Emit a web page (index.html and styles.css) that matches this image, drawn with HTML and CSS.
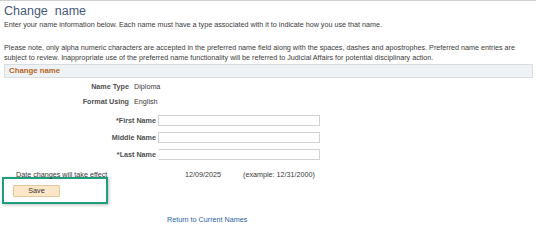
FILE: index.html
```html
<!DOCTYPE html>
<html>
<head>
<meta charset="utf-8">
<link rel="stylesheet" href="styles.css">
</head>
<body>
<div class="topline"></div>
<div class="page">
  <h1 class="title">Change&nbsp; name</h1>
  <p class="intro">Enter your name information below. Each name must have a type associated with it to indicate how you use that name.</p>
  <p class="note">Please note, only alpha numeric characters are accepted in the preferred name field along with the spaces, dashes and apostrophes. Preferred name entries are subject to review. Inappropriate use of the preferred name functionality will be referred to Judicial Affairs for potential disciplinary action.</p>
  <div class="section-head">Change name</div>

  <div class="info-grid">
    <span class="lbl">Name Type</span><span class="val">Diploma</span>
    <span class="lbl">Format Using</span><span class="val">English</span>
  </div>

  <div class="name-grid">
    <label class="lbl">*First Name</label><span class="field"></span>
    <label class="lbl">Middle Name</label><span class="field"></span>
    <label class="lbl">*Last Name</label><span class="field last"></span>
  </div>

  <div class="date-row">
    <span class="date-lbl">Date changes will take effect</span>
    <span class="date-val">12/09/2025</span>
    <span class="date-ex">(example: 12/31/2000)</span>
  </div>

  <div class="highlight">
    <button class="save">Save</button>
  </div>

  <div class="return-row"><a class="return" href="#">Return to Current Names</a></div>
</div>
</body>
</html>
```
FILE: styles.css
```css
html, body {
  margin: 0;
  padding: 0;
  background: #fff;
}
body {
  font-family: "Liberation Sans", Arial, sans-serif;
  color: #3a3a3a;
  width: 540px;
  height: 226px;
  overflow: hidden;
}
.topline {
  height: 1px;
  background: #cfcfcf;
  margin-right: 4px;
}
.page {
  padding: 0 4px;
}
.title {
  margin: 2px 0 0 0;
  font-size: 12.5px;
  line-height: 16px;
  font-weight: normal;
  color: #44597a;
}
.intro, .note {
  margin: 0;
  font-size: 7.2px;
  line-height: 10px;
  color: #3a3a3a;
}
.intro {
  margin-top: 1px;
}
.note {
  margin-top: 13px;
}
.section-head {
  margin-top: 1px;
  width: 523px;
  height: 12px;
  background: #eff2f5;
  border: 1px solid #d8dde2;
  color: #b5651d;
  font-weight: bold;
  font-size: 7.8px;
  line-height: 12px;
  padding-left: 4px;
  box-sizing: content-box;
}
.info-grid {
  display: grid;
  grid-template-columns: 125px auto;
  column-gap: 5px;
  margin-top: 1px;
  font-size: 7.2px;
}
.info-grid > span {
  line-height: 15px;
}
.lbl {
  text-align: right;
  font-weight: bold;
  color: #505050;
}
.val {
  color: #3a3a3a;
}
.name-grid {
  display: grid;
  grid-template-columns: 152px 162px;
  column-gap: 2px;
  row-gap: 6px;
  margin-top: 6px;
  align-items: center;
  font-size: 7.2px;
}
.field {
  display: block;
  height: 9px;
  border: 1px solid #d2d2d2;
  background: #fff;
}
.field.last {
  border-left-color: #fff;
}
.date-row {
  display: flex;
  align-items: center;
  margin-top: 10px;
  font-size: 7.2px;
  line-height: 9px;
}
.date-lbl {
  margin-left: 12px;
  width: 169px;
}
.date-val {
  width: 58px;
}
.highlight {
  margin: -2px 0 0 -2px;
  border: 2px solid #1f9e7c;
  box-shadow: 1px 1px 3px rgba(0,0,0,0.25);
  padding: 6px 0 0 9px;
  box-sizing: content-box;
  width: 93px;
  height: 17px;
}
.save {
  display: block;
  width: 47px;
  height: 12px;
  padding: 0;
  margin: 0;
  background: #fce6c8;
  border: 1px solid #e3c79f;
  border-radius: 1px;
  font-family: "Liberation Sans", Arial, sans-serif;
  font-size: 7.2px;
  line-height: 10px;
  color: #333;
}
.return-row {
  margin-top: 11px;
  padding-left: 163px;
  font-size: 7.2px;
  line-height: 9px;
}
.return {
  color: #2a5fa5;
  text-decoration: none;
}
```
